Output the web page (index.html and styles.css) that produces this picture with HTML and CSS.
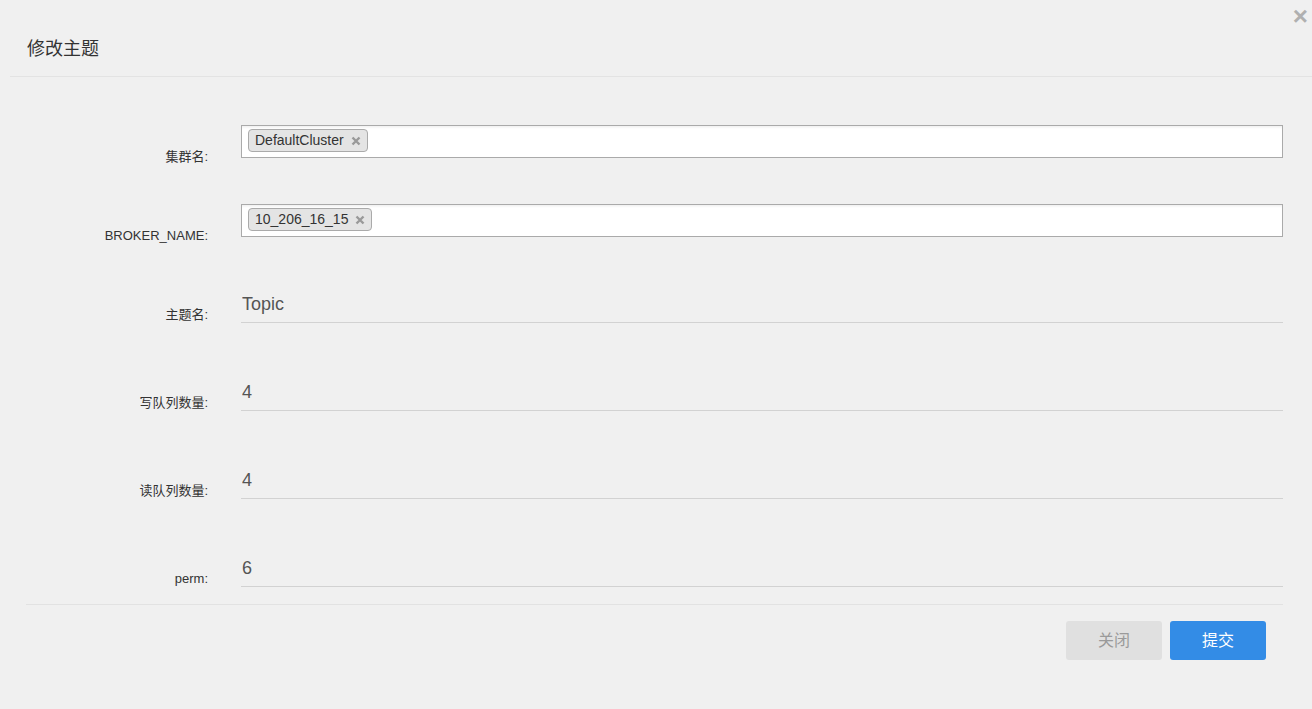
FILE: index.html
```html
<!DOCTYPE html>
<html lang="zh-CN">
<head>
    <meta charset="UTF-8">
    <meta name="viewport" content="width=device-width, initial-scale=1.0">
    <title>修改主题</title>
    <link rel="stylesheet" href="styles.css">
</head>
<body>
    <div class="dialog">
        <button class="dialog-close" type="button">&times;</button>

        <div class="dialog-header">
            <h3>修改主题</h3>
        </div>

        <div class="dialog-body">
            <div class="form-row select-row">
                <label>集群名:</label>
                <div class="multi-select">
                    <span class="choice">DefaultCluster<svg class="choice-remove" viewBox="0 0 10 10"><path d="M1.5 1.5L8.5 8.5M8.5 1.5L1.5 8.5"/></svg></span>
                </div>
            </div>

            <div class="form-row select-row">
                <label>BROKER_NAME:</label>
                <div class="multi-select">
                    <span class="choice">10_206_16_15<svg class="choice-remove" viewBox="0 0 10 10"><path d="M1.5 1.5L8.5 8.5M8.5 1.5L1.5 8.5"/></svg></span>
                </div>
            </div>

            <div class="form-row">
                <label>主题名:</label>
                <input class="md-input" type="text" value="Topic">
            </div>

            <div class="form-row">
                <label>写队列数量:</label>
                <input class="md-input" type="text" value="4">
            </div>

            <div class="form-row">
                <label>读队列数量:</label>
                <input class="md-input" type="text" value="4">
            </div>

            <div class="form-row">
                <label>perm:</label>
                <input class="md-input" type="text" value="6">
            </div>
        </div>

        <div class="dialog-footer">
            <button class="btn btn-default" type="button">关闭</button>
            <button class="btn btn-primary" type="button">提交</button>
        </div>
    </div>
</body>
</html>
```

FILE: styles.css
```css
* {
    margin: 0;
    padding: 0;
    box-sizing: border-box;
}

body {
    background-color: #f0f0f0;
    color: #333;
    font-family: "Liberation Sans", "Noto Sans CJK SC", sans-serif;
}

.dialog {
    position: relative;
    margin-left: 10px;
    height: 709px;
}

.dialog-close {
    position: absolute;
    top: 3px;
    right: 4px;
    border: none;
    background: none;
    color: #b0b0b0;
    font-size: 26px;
    font-weight: bold;
    line-height: 26px;
    font-family: "Liberation Sans", sans-serif;
    cursor: pointer;
}

.dialog-header {
    padding: 36px 17px 18px;
    border-bottom: 1px solid #e3e3e3;
}

.dialog-header h3 {
    font-size: 18px;
    font-weight: normal;
    line-height: 22px;
    color: #333;
    font-family: "Noto Sans CJK SC", sans-serif;
}

.dialog-body {
    padding: 48px 29px 0 16px;
}

.form-row {
    display: flex;
    align-items: flex-end;
    gap: 33px;
    margin-top: 48px;
}

.form-row.select-row + .form-row {
    margin-top: 46px;
}

.form-row:first-child {
    margin-top: 0;
}

.form-row label {
    width: 182px;
    flex-shrink: 0;
    text-align: right;
    font-size: 13px;
    line-height: 18px;
    color: #333;
    margin-bottom: -1px;
}

.select-row label {
    margin-bottom: -8px;
}

.multi-select {
    flex: 1;
    height: 33px;
    padding: 3px 6px;
    background: #fff;
    border: 1px solid #aaa;
    box-shadow: inset 0 3px 3px -2px rgba(0, 0, 0, 0.08);
}

.choice {
    display: inline-flex;
    align-items: center;
    height: 23px;
    padding: 0 6px 0 6px;
    border: 1px solid #aaa;
    border-radius: 4px;
    background: #e4e4e4;
    font-size: 14px;
    line-height: 21px;
    color: #333;
}

.choice-remove {
    width: 10px;
    height: 10px;
    margin-left: 7px;
    margin-top: 1px;
    fill: none;
    stroke: #999;
    stroke-width: 2.4;
}

.md-input {
    flex: 1;
    height: 40px;
    padding: 8px 0 5px 1px;
    border: none;
    border-bottom: 1px solid #d2d2d2;
    background: transparent;
    font-family: "Liberation Sans", sans-serif;
    font-size: 18px;
    line-height: 26px;
    color: #555;
    outline: none;
}

.dialog-footer {
    display: flex;
    justify-content: flex-end;
    gap: 8px;
    margin: 17px 29px 0 16px;
    padding: 16px 17px 0 0;
    border-top: 1px solid #e2e2e2;
}

.btn {
    width: 96px;
    height: 39px;
    padding-bottom: 3px;
    border: none;
    border-radius: 3px;
    font-size: 16px;
    font-family: "Noto Sans CJK SC", sans-serif;
    cursor: pointer;
}

.btn-default {
    background-color: #e0e0e0;
    color: #9a9a9a;
}

.btn-primary {
    background-color: #338ce6;
    color: #fff;
}
```
